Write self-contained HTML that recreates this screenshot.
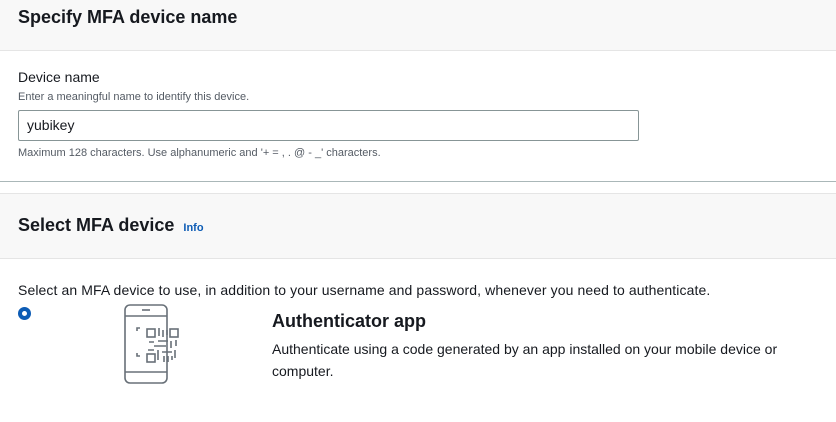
<!DOCTYPE html>
<html><head><style>
body{margin:0;width:836px;height:422px;overflow:hidden;background:#fff;font-family:"Liberation Sans",Arial,sans-serif;color:#16191f;position:relative}
.a{position:absolute;white-space:nowrap}
</style></head><body>
<div class="a" style="left:0;top:0;width:836px;height:50px;background:#f8f8f8;border-bottom:1px solid #e5e5e5"></div>
<div class="a" style="left:18px;top:7px;font-size:18px;font-weight:bold">Specify MFA device name</div>
<div class="a" style="left:18px;top:69px;font-size:14px">Device name</div>
<div class="a" style="left:18px;top:91px;font-size:11px;color:#545b64">Enter a meaningful name to identify this device.</div>
<div class="a" style="left:18px;top:110px;width:619px;height:29px;border:1px solid #879596;border-radius:2px"></div>
<div class="a" style="left:27px;top:117px;font-size:14px">yubikey</div>
<div class="a" style="left:18px;top:147px;font-size:11px;color:#545b64">Maximum 128 characters. Use alphanumeric and '+ = , . @ - _' characters.</div>
<div class="a" style="left:0;top:181px;width:836px;height:1px;background:#aab7b8"></div>
<div class="a" style="left:0;top:193px;width:836px;height:64px;background:#f8f8f8;border-top:1px solid #e5e5e5;border-bottom:1px solid #e5e5e5"></div>
<div class="a" style="left:18px;top:215px;font-size:18px;font-weight:bold">Select MFA device <span style="font-size:11px;color:#0d5cb5;margin-left:4px">Info</span></div>
<div class="a" style="left:18px;top:282px;font-size:14px;letter-spacing:0.1px">Select an MFA device to use, in addition to your username and password, whenever you need to authenticate.</div>
<div class="a" style="left:18px;top:307px;width:5px;height:5px;border:4.5px solid #0d5cb5;border-radius:50%;background:#fff"></div>
<svg class="a" style="left:124px;top:304px" width="60" height="82" viewBox="0 0 60 82" fill="none" stroke="#687078" stroke-width="1.6">
<rect x="1" y="1" width="42" height="78" rx="5"/>
<line x1="1" y1="12" x2="43" y2="12"/><line x1="1" y1="68" x2="43" y2="68"/>
<line x1="18" y1="6" x2="26" y2="6"/>
<path d="M13 27v-3h3M13 49v3h3"/>
<rect x="23" y="25" width="8" height="8"/><rect x="46" y="25" width="8" height="8"/><rect x="23" y="50" width="8" height="8"/>
<path d="M35 24v8M39 26v7M43 26v5M34 37h10M25 38h5M47 37v7M52 36v6M30 42h12M24 46h6M34 46v10M38 48h10M40 52v6M44 52v6M48 52v4M51 46v8"/>
</svg>
<div class="a" style="left:272px;top:311px;font-size:18px;font-weight:bold">Authenticator app</div>
<div class="a" style="left:272px;top:338px;font-size:14px;line-height:22px">Authenticate using a code generated by an app installed on your mobile device or<br>computer.</div>
</body></html>
